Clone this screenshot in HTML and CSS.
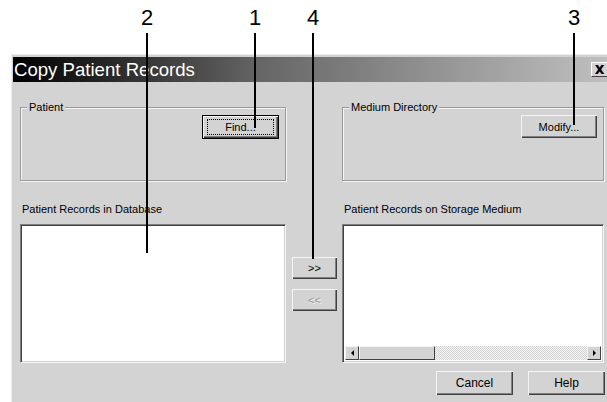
FILE: index.html
```html
<!DOCTYPE html>
<html>
  <head>
    <meta charset="UTF-8">
    <title>Copy Patient Records</title>
    <link rel="stylesheet" href="styles.css">
  </head>
  <body>
    <div class="dialog">
      <div class="titlebar">
        <span class="title">Copy Patient Records</span>
        <span class="close">x</span>
      </div>

      <div class="content">
        <div class="group group-patient">
          <span class="legend">Patient</span>
          <button class="btn btn-default"><span class="focus">Find...</span></button>
        </div>

        <div class="group group-medium">
          <span class="legend">Medium Directory</span>
          <button class="btn">Modify...</button>
        </div>

        <div class="label label-left">Patient Records in Database</div>
        <div class="label label-right">Patient Records on Storage Medium</div>

        <div class="listbox list-left"></div>

        <div class="transfer">
          <button class="btn btn-small">&gt;&gt;</button>
          <button class="btn btn-small" disabled>&lt;&lt;</button>
        </div>

        <div class="listbox list-right">
          <div class="hscroll">
            <span class="arrow arrow-left"></span>
            <span class="thumb"></span>
            <span class="track"></span>
            <span class="arrow arrow-right"></span>
          </div>
        </div>

        <div class="footer">
          <button class="btn btn-wide">Cancel</button>
          <button class="btn btn-wide">Help</button>
        </div>
      </div>
    </div>

    <!-- callout numbers drawn over the dialog -->
    <div class="callout c1"><span class="num">1</span><span class="line"></span></div>
    <div class="callout c2"><span class="num">2</span><span class="line"></span></div>
    <div class="callout c3"><span class="num">3</span><span class="line"></span></div>
    <div class="callout c4"><span class="num">4</span><span class="line"></span></div>
  </body>
</html>
```

FILE: styles.css
```css
body {
margin: 0;
background: #fff;
overflow: hidden;
font-family: "Liberation Sans", Arial, sans-serif;
}

.dialog {
margin: 54px 0 0 11px;
width: 620px;
height: 360px;
background: #d3d3d3;
border-top: 1px solid #ececec;
border-left: 1px solid #ececec;
padding: 2px 0 0 1px;
}

.titlebar {
height: 25px;
display: flex;
align-items: center;
padding-left: 1px;
background: linear-gradient(to right, #000 0%, #666 40%, #c6c6c6 100%);
}

.title {
color: #fff;
font-size: 18.6px;
line-height: 25px;
}

.close {
box-sizing: border-box;
margin-left: auto;
margin-right: 26px;
width: 16px;
height: 15px;
background: #d3d3d3;
border-top: 1px solid #fff;
border-left: 1px solid #fff;
border-bottom: 1px solid #404040;
font-family: "DejaVu Sans", sans-serif;
font-size: 15px;
font-weight: bold;
line-height: 12px;
text-align: center;
}

.content {
display: grid;
grid-template-columns: 266px 56px 262px;
grid-template-rows: 74px 43px 139px 32px;
padding: 25px 0 0 7px;
font-size: 11px;
color: #000;
}

.group {
position: relative;
border: 1px solid #9a9a9a;
box-shadow: inset 1px 1px 0 #f4f4f4, 1px 1px 0 #f4f4f4;
display: flex;
justify-content: flex-end;
align-items: flex-start;
padding: 7px 6px 0 0;
}

.group-patient {
grid-column: 1;
}

.group-medium {
grid-column: 3;
}

.legend {
position: absolute;
top: -7px;
left: 6px;
padding: 0 2px;
background: #d3d3d3;
font-size: 11px;
line-height: 13px;
}

.label {
grid-row: 2;
align-self: end;
padding: 0 0 8px 2px;
line-height: 13px;
}

.label-left {
grid-column: 1;
}

.label-right {
grid-column: 3;
}

.listbox {
grid-row: 3;
background: #fff;
border-top: 1px solid #808080;
border-left: 1px solid #808080;
border-right: 1px solid #f4f4f4;
border-bottom: 1px solid #f4f4f4;
box-shadow: inset 1px 1px 0 #404040, inset -1px -1px 0 #d3d3d3;
display: flex;
flex-direction: column;
justify-content: flex-end;
padding: 0 2px 2px 2px;
}

.list-left {
grid-column: 1;
}

.list-right {
grid-column: 3;
}

.hscroll {
display: flex;
height: 14px;
}

.arrow {
width: 12px;
height: 12px;
background: #d3d3d3;
border-top: 1px solid #f4f4f4;
border-left: 1px solid #f4f4f4;
border-bottom: 1px solid #404040;
border-right: 1px solid #404040;
display: flex;
align-items: center;
justify-content: center;
}

.arrow::after {
content: "";
border-top: 3px solid transparent;
border-bottom: 3px solid transparent;
}

.arrow-left::after {
border-right: 3px solid #000;
}

.arrow-right::after {
border-left: 3px solid #000;
}

.thumb {
width: 74px;
background: #d3d3d3;
border-top: 1px solid #f4f4f4;
border-left: 1px solid #f4f4f4;
border-bottom: 1px solid #404040;
border-right: 1px solid #404040;
}

.track {
flex: 1;
background: repeating-conic-gradient(#d3d3d3 0 25%, #f4f4f4 0 50%) 0 0 / 2px 2px;
}

.transfer {
grid-column: 2;
grid-row: 3;
display: flex;
flex-direction: column;
gap: 10px;
padding: 33px 0 0 6px;
}

.btn {
font-family: "Liberation Sans", Arial, sans-serif;
font-size: 11px;
color: #000;
background: #d3d3d3;
border: none;
border-radius: 0;
padding: 0;
box-shadow: inset 1px 1px 0 #f4f4f4, inset -1px -1px 0 #404040, inset -2px -2px 0 #808080;
width: 76px;
height: 23px;
}

.btn-default {
border: 1px solid #000;
width: 77px;
height: 24px;
display: flex;
align-items: center;
justify-content: center;
}

.focus {
display: block;
width: 65px;
height: 14px;
line-height: 14px;
border: 1px dotted #000;
}

.btn-small {
width: 45px;
height: 22px;
}

.btn-small:disabled {
color: #9a9a9a;
text-shadow: 1px 1px 0 #f4f4f4;
}

.footer {
grid-column: 1 / 4;
grid-row: 4;
display: flex;
justify-content: flex-end;
gap: 15px;
padding: 8px 0 0 0;
margin-right: -1px;
}

.btn-wide {
width: 77px;
height: 24px;
font-size: 12px;
}

.callout {
position: absolute;
top: 7px;
width: 20px;
display: flex;
flex-direction: column;
align-items: center;
}

.num {
font-size: 22px;
line-height: 22px;
}

.line {
margin-top: 4px;
width: 2px;
background: #000;
}

.c1 { left: 245px; }
.c1 .line { height: 95px; }

.c2 { left: 137px; }
.c2 .line { height: 220px; }

.c3 { left: 564px; }
.c3 .line { height: 92px; }

.c4 { left: 303px; }
.c4 .line { height: 226px; }
```
